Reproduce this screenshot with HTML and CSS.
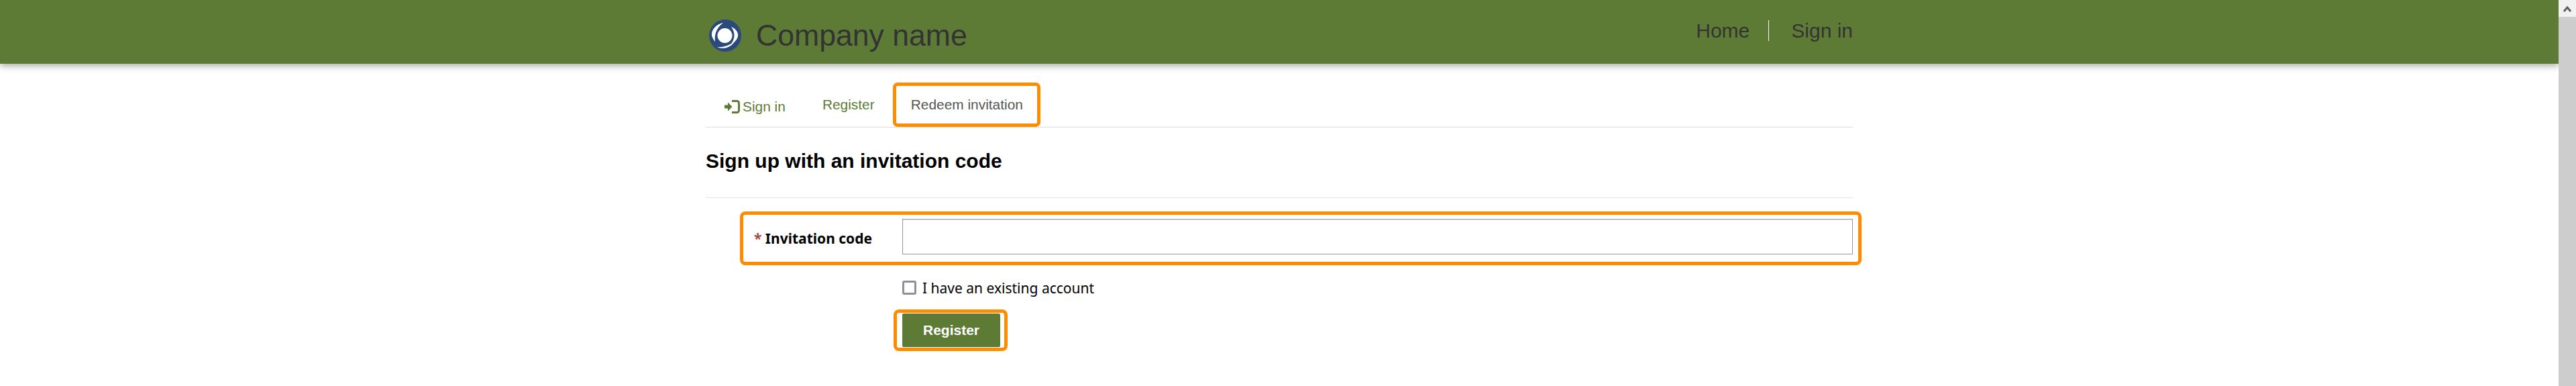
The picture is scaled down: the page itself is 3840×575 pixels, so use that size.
FILE: index.html
```html
<!DOCTYPE html>
<html lang="en">
<head>
<meta charset="UTF-8" />
<meta name="viewport" content="width=device-width, initial-scale=1" />
<title>Redeem invitation</title>
<link rel="stylesheet" href="styles.css">
</head>
<body>

<div class="page">
  <header class="navbar">
    <div class="container navbar-inner">
      <a class="brand" href="#">
        <svg class="brand-logo" viewBox="0 0 48 48" width="48" height="48" aria-hidden="true">
          <circle cx="24" cy="24" r="24" fill="#2b4a7a" />
          <circle cx="23.5" cy="24" r="11" fill="#fff" />
          <path fill="#fff" d="M21 5C11 7 3 15 4 24C5 28 7 31 9 33C8 25 9 14 21 5Z" />
          <path fill="#fff" d="M33 11C40 14 44 19 43 25C42 30 38 34 33 36C38 30 40 20 33 11Z" />
          <path fill="#fff" d="M12 41C20 45 33 43 39 31C34 37 24 42 12 41Z" />
        </svg>
        <span class="brand-name">Company name</span>
      </a>
      <nav class="nav-links">
        <a href="#">Home</a>
        <span class="nav-divider"></span>
        <a href="#">Sign in</a>
      </nav>
    </div>
  </header>

  <main class="container">
    <div class="tabs">
      <a class="tab tab-signin" href="#">
        <svg class="tab-icon" viewBox="0 0 23 20" width="23" height="20" aria-hidden="true">
          <path fill="#5e7b36" d="M0 7.5h5V3.500l6.500 6.500-6.500 6.500v-4H0z" />
          <path fill="none" stroke="#5e7b36" stroke-width="3" d="M11 1.500h7.500a3 3 0 0 1 3 3v11a3 3 0 0 1-3 3H11" />
        </svg>
        Sign in
      </a>
      <a class="tab" href="#">Register</a>
      <a class="tab tab-active" href="#">Redeem invitation</a>
    </div>

    <h1 class="page-title">Sign up with an invitation code</h1>
    <hr class="divider" />

    <div class="form-row">
      <label class="form-label" for="code"><span class="required">*</span> Invitation code</label>
      <input class="form-input" type="text" id="code" />
    </div>

    <label class="check-row">
      <span class="check-box"></span>
      I have an existing account
    </label>

    <div class="submit-box">
      <button class="submit-btn" type="button">Register</button>
    </div>
  </main>
</div>

<div class="scrollbar">
  <div class="scrollbar-btn">
    <svg viewBox="0 0 12 10" width="12" height="10" aria-hidden="true">
      <path fill="none" stroke="#5f5f5f" stroke-width="3" d="M1 9l5-6 5 6" />
    </svg>
  </div>
</div>

</body>
</html>
```

FILE: styles.css
```css
html, body {
  height: 100%;
}
body {
  margin: 0;
  display: flex;
  overflow: hidden;
  background: #fff;
  color: #000;
  font-family: "Liberation Sans", Arial, sans-serif;
}
a {
  text-decoration: none;
}
.page {
  flex: 1;
  min-width: 0;
  overflow: hidden;
}
.container {
  display: block;
  width: 1710px;
  margin: 0 auto;
}

/* top bar */
.navbar {
  height: 95px;
  background: #5e7b36;
  box-shadow: 0 3px 10px rgba(0, 0, 0, 0.35);
}
.navbar-inner {
  display: flex;
  justify-content: space-between;
}
.brand {
  display: flex;
  align-items: center;
  height: 106px;
  padding-left: 5px;
  color: #333;
}
.brand-name {
  margin-left: 22px;
  font-size: 44.6px;
}
.nav-links {
  display: flex;
  align-items: center;
  height: 91px;
  font-size: 30px;
}
.nav-links a {
  color: #333;
}
.nav-divider {
  width: 1px;
  height: 31px;
  margin: 0 33px 0 28px;
  background: #fff;
}

/* tabs */
.tabs {
  display: flex;
  margin-top: 28px;
  border-bottom: 1px solid #ddd;
  font-size: 20.9px;
}
.tab {
  display: flex;
  align-items: center;
  height: 66px;
  padding: 0 27px 0 28px;
  color: #5e7b36;
}
.tab-signin {
  box-sizing: border-box;
  padding-right: 27px;
  padding-top: 6px;
}
.tab-icon {
  margin-right: 4px;
}
.tab-active {
  box-sizing: border-box;
  padding: 0 21px 0 22px;
  border: 5px solid #ff8c00;
  border-radius: 7px;
  color: #555;
}

/* form */
.page-title {
  margin: 32px 0 0;
  font-size: 30px;
  line-height: 36px;
}
.divider {
  height: 1px;
  margin: 36px 0 20px;
  border: 0;
  background: #e5e5e5;
}
.form-row {
  display: flex;
  align-items: center;
  margin: 0 -13px 0 51px;
  padding: 6px 8px 11px 16px;
  border: 5px solid #ff8c00;
  border-radius: 8px;
}
.form-label {
  width: 221px;
  flex: none;
  padding-top: 4px;
  font-family: "Noto Sans", sans-serif;
  font-size: 21px;
  font-weight: 700;
}
.required {
  color: #a94442;
}
.form-input {
  flex: 1;
  height: 53px;
  box-sizing: border-box;
  padding: 0 8px;
  border: 1px solid #999;
  border-radius: 0;
  box-shadow: inset 0 1px 2px rgba(0, 0, 0, 0.1);
}
.check-row {
  display: flex;
  align-items: center;
  height: 21px;
  margin: 23px 0 0 293px;
  font-family: "Noto Sans", sans-serif;
  font-size: 21px;
}
.check-box {
  width: 21px;
  height: 21px;
  box-sizing: border-box;
  margin-right: 9px;
  border: 3px solid #8f8f9d;
  border-radius: 3px;
}
.submit-box {
  display: inline-flex;
  margin: 22px 0 0 280px;
  padding: 1px 6px 1px 8px;
  border: 5px solid #ff8c00;
  border-radius: 8px;
}
.submit-btn {
  width: 146px;
  height: 50px;
  padding: 0;
  border: 0;
  border-radius: 2px;
  background: #5e7b36;
  color: #fff;
  font-family: "Liberation Sans", Arial, sans-serif;
  font-size: 21px;
  font-weight: 700;
}

/* scrollbar column */
.scrollbar {
  flex: none;
  width: 26px;
  background: #cdcdcd;
}
.scrollbar-btn {
  display: flex;
  align-items: center;
  justify-content: center;
  height: 25px;
  background: #f1f1f1;
}
```
